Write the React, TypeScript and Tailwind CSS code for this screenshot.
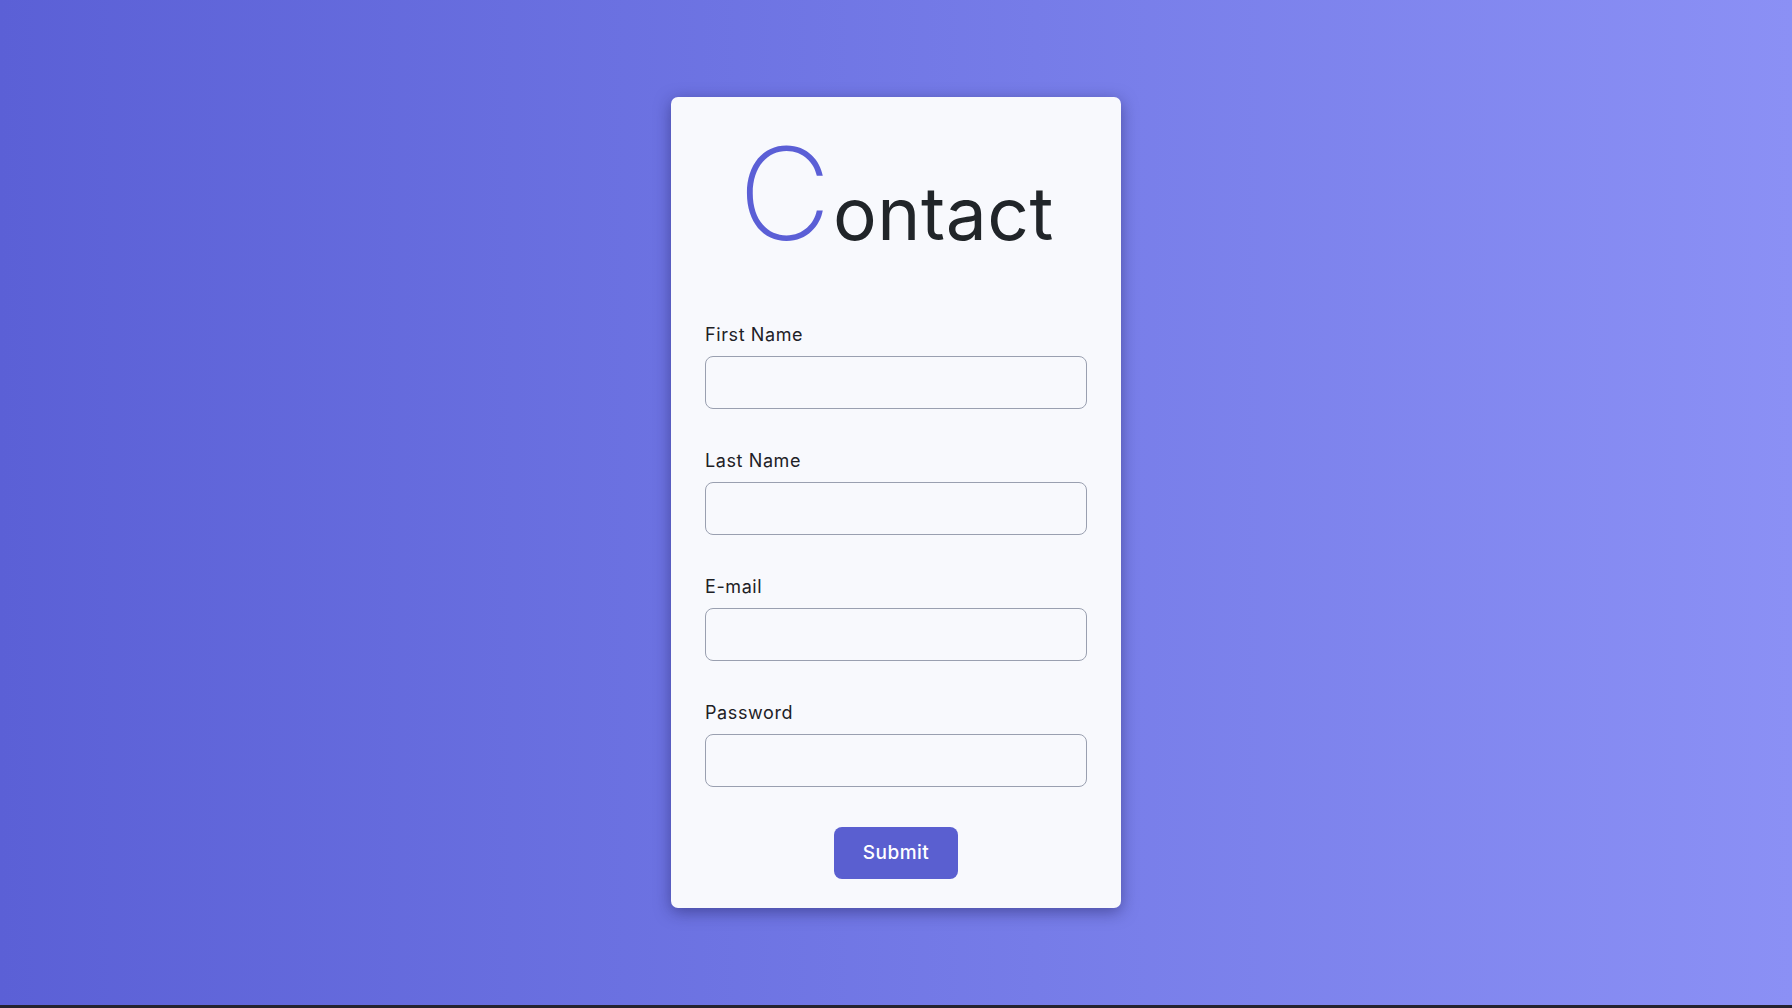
import React from 'react'

const fields = [
  { id: 'first-name', label: 'First Name', type: 'text' },
  { id: 'last-name', label: 'Last Name', type: 'text' },
  { id: 'email', label: 'E-mail', type: 'email' },
  { id: 'password', label: 'Password', type: 'password' },
]

const App: React.FC = () => {
  return (
    <div className="min-h-[1008px] bg-[#25232f] font-['Inter',sans-serif]">
      <div className="h-[1005px] bg-gradient-to-r from-[#5b60d6] to-[#8b90f5] flex items-center justify-center">
        {/* Card */}
        <div className="w-[450px] h-[811px] bg-[#f8f9fd] rounded-[7px] shadow-[0_4px_16px_rgba(30,30,90,0.5)] px-[34px] pt-[29px] flex flex-col">
          <h1 className="flex items-baseline justify-center h-[150px] pt-[4px] leading-none text-[#212529]">
            <span className="text-[128px] font-extralight text-[#5b5fd6] leading-none tracking-[2px]">C</span>
            <span className="text-[73px] font-normal leading-none tracking-[0.5px]">ontact</span>
          </h1>

          <form className="mt-[48px] flex flex-col gap-[41px]" onSubmit={(e) => e.preventDefault()}>
            {fields.map((field) => (
              <div key={field.id} className="flex flex-col">
                <label htmlFor={field.id} className="text-[18px] text-[#1e2126] leading-[21px] mb-[11px] tracking-[0.6px]">
                  {field.label}
                </label>
                <input
                  id={field.id}
                  type={field.type}
                  className="h-[53px] w-full rounded-[8px] border border-[#9aa0b0] bg-[#f8f9fd] px-3 outline-none"
                />
              </div>
            ))}
          </form>

          <div className="flex justify-center mt-[40px]">
            <button
              type="submit"
              className="w-[124px] h-[52px] rounded-[8px] bg-[#5a5fd0] text-white text-[19px] font-medium tracking-[0.5px]"
            >
              Submit
            </button>
          </div>
        </div>
      </div>
    </div>
  )
}

export default App
